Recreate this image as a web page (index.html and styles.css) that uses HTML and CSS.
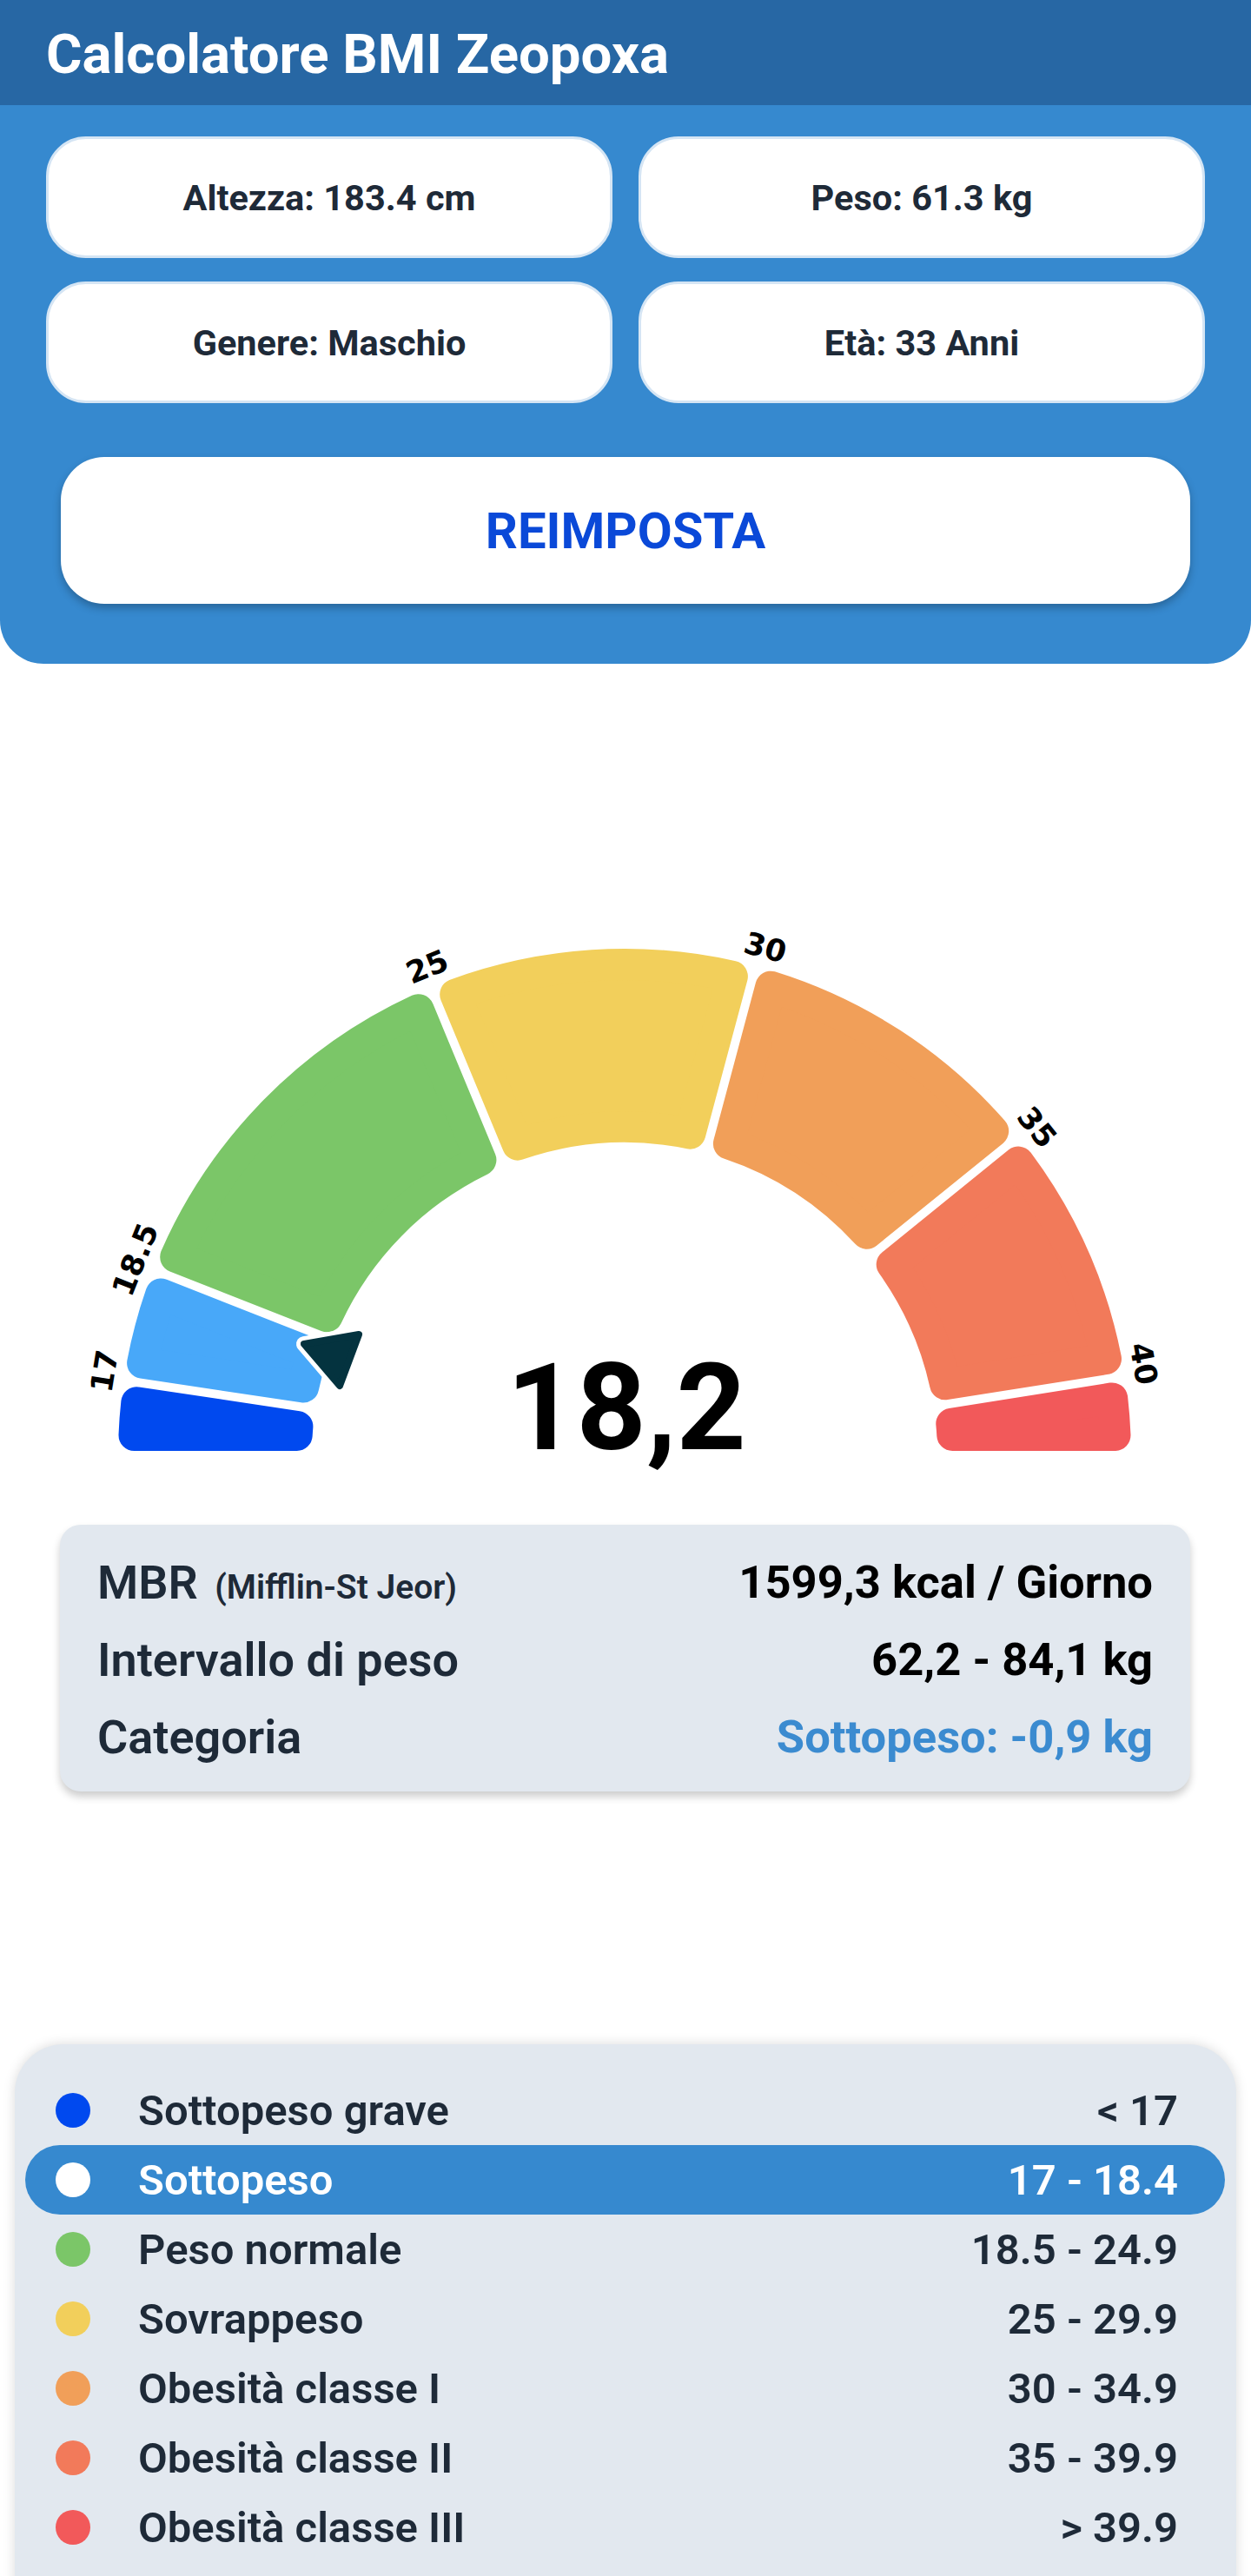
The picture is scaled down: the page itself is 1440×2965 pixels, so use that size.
FILE: index.html
```html
<!DOCTYPE html>
<html lang="it">
<head>
    <meta charset="UTF-8">
    <meta name="viewport" content="width=device-width, initial-scale=1.0">
    <title>Calcolatore BMI Zeopoxa</title>
    <link rel="stylesheet" href="styles.css">
</head>
<body>
    <!-- Top bar -->
    <header class="topBar">
        <h1>Calcolatore BMI Zeopoxa</h1>
    </header>

    <!-- Input summary -->
    <section class="inputPanel">
        <div class="inputGrid">
            <div class="inputCard">Altezza: 183.4 cm</div>
            <div class="inputCard">Peso: 61.3 kg</div>
            <div class="inputCard">Genere: Maschio</div>
            <div class="inputCard">Età: 33 Anni</div>
        </div>
        <button type="button" class="resetButton">REIMPOSTA</button>
    </section>

    <!-- Gauge -->
    <section class="gaugeSection">
        <svg id="gauge" width="1440" height="700" viewBox="0 0 1440 700">
            <g id="gaugeSegments"></g>
            <g id="gaugeLabels"></g>
            <polygon class="pointerOutline" points="413,506 350,517 391,565"></polygon>
            <polygon class="pointer" points="413,506 350,517 391,565"></polygon>
            <text class="bmiValue" x="721" y="638" text-anchor="middle">18,2</text>
        </svg>
    </section>

    <!-- Results -->
    <section class="resultBox">
        <div class="resultRow">
            <span class="resultLabel">MBR <small>(Mifflin-St Jeor)</small></span>
            <span class="resultValue">1599,3 kcal / Giorno</span>
        </div>
        <div class="resultRow">
            <span class="resultLabel">Intervallo di peso</span>
            <span class="resultValue">62,2 - 84,1 kg</span>
        </div>
        <div class="resultRow">
            <span class="resultLabel">Categoria</span>
            <span class="resultValue categoryValue">Sottopeso: -0,9 kg</span>
        </div>
    </section>

    <!-- Legend -->
    <section class="legendBox">
        <div class="legendRow">
            <span class="legendDot dotSevere"></span>
            <span class="legendName">Sottopeso grave</span>
            <span class="legendRange">&lt; 17</span>
        </div>
        <div class="legendRow active">
            <span class="legendDot"></span>
            <span class="legendName">Sottopeso</span>
            <span class="legendRange">17 - 18.4</span>
        </div>
        <div class="legendRow">
            <span class="legendDot dotNormal"></span>
            <span class="legendName">Peso normale</span>
            <span class="legendRange">18.5 - 24.9</span>
        </div>
        <div class="legendRow">
            <span class="legendDot dotOver"></span>
            <span class="legendName">Sovrappeso</span>
            <span class="legendRange">25 - 29.9</span>
        </div>
        <div class="legendRow">
            <span class="legendDot dotObese1"></span>
            <span class="legendName">Obesità classe I</span>
            <span class="legendRange">30 - 34.9</span>
        </div>
        <div class="legendRow">
            <span class="legendDot dotObese2"></span>
            <span class="legendName">Obesità classe II</span>
            <span class="legendRange">35 - 39.9</span>
        </div>
        <div class="legendRow">
            <span class="legendDot dotObese3"></span>
            <span class="legendName">Obesità classe III</span>
            <span class="legendRange">&gt; 39.9</span>
        </div>
    </section>

    <script>
        const cx = 719, cy = 645;
        const rIn = 360, rOut = 583;
        const gap = 10, corner = 18;

        const segments = [
            { from: 0, to: 8.5, color: "#0049ef" },
            { from: 8.5, to: 21.5, color: "#48a8f9" },
            { from: 21.5, to: 67.5, color: "#7bc668" },
            { from: 67.5, to: 105, color: "#f2cf5b" },
            { from: 105, to: 141, color: "#f19f59" },
            { from: 141, to: 171, color: "#f27a5a" },
            { from: 171, to: 180, color: "#f2595a" }
        ];

        const labels = [
            { text: "17", angle: 9.2 },
            { text: "18.5", angle: 21.8 },
            { text: "25", angle: 68 },
            { text: "30", angle: 105.5 },
            { text: "35", angle: 141.5 },
            { text: "40", angle: 170 }
        ];

        function point(deg, r) {
            const a = deg * Math.PI / 180;
            return (cx - r * Math.cos(a)).toFixed(1) + "," + (cy - r * Math.sin(a)).toFixed(1);
        }

        function offset(dist, r) {
            return Math.asin(dist / r) * 180 / Math.PI;
        }

        function drawGauge() {
            const ro = rOut - corner;
            const ri = rIn + corner;
            const d = gap / 2 + corner;
            let html = "";

            segments.forEach((seg) => {
                const o1 = point(seg.from + offset(d, ro), ro);
                const o2 = point(seg.to - offset(d, ro), ro);
                const i2 = point(seg.to - offset(d, ri), ri);
                const i1 = point(seg.from + offset(d, ri), ri);
                html += `<path d="M${o1} A${ro} ${ro} 0 0 1 ${o2} L${i2} A${ri} ${ri} 0 0 0 ${i1} Z"
                    fill="${seg.color}" stroke="${seg.color}" stroke-width="${corner * 2}" stroke-linejoin="round"></path>`;
            });
            document.getElementById("gaugeSegments").innerHTML = html;

            let labelHtml = "";
            labels.forEach((label) => {
                const a = label.angle * Math.PI / 180;
                const x = (cx - 607 * Math.cos(a)).toFixed(1);
                const y = (cy - 607 * Math.sin(a)).toFixed(1);
                labelHtml += `<text class="gaugeLabel" text-anchor="middle" dy="0.36em"
                    transform="translate(${x} ${y}) rotate(${label.angle - 90})">${label.text}</text>`;
            });
            document.getElementById("gaugeLabels").innerHTML = labelHtml;
        }

        drawGauge();
    </script>
</body>
</html>
```

FILE: styles.css
```css
body {
    margin: 0;
    font-family: Roboto, "Noto Sans", sans-serif;
    background-color: #fff;
    color: #1e2a38;
}

.topBar {
    height: 121px;
    padding: 4px 0 0 53px;
    box-sizing: border-box;
    display: flex;
    align-items: center;
    background-color: #2767a4;
}

.topBar h1 {
    margin: 0;
    color: #fff;
    font-size: 63.5px;
    font-weight: 700;
}

/* Input summary */
.inputPanel {
    padding: 36px 53px 69px;
    background-color: #3689cf;
    border-radius: 0 0 50px 50px;
}

.inputGrid {
    display: grid;
    grid-template-columns: 1fr 1fr;
    column-gap: 30px;
    row-gap: 27px;
}

.inputCard {
    height: 140px;
    box-sizing: border-box;
    display: flex;
    align-items: center;
    justify-content: center;
    background-color: #fff;
    border: 3px solid #d5e5f4;
    border-radius: 46px;
    font-size: 41.5px;
    font-weight: 700;
}

.resetButton {
    display: block;
    width: calc(100% - 34px);
    height: 169px;
    margin: 62px 17px 0;
    border: none;
    border-radius: 50px;
    background-color: #fff;
    color: #0a49d8;
    font-family: Roboto, sans-serif;
    font-size: 58px;
    font-weight: 700;
    box-shadow: 0 5px 10px rgba(0, 0, 0, 0.25);
    cursor: pointer;
}

/* Gauge */
.gaugeSection {
    margin-top: 266px;
}

#gauge {
    display: block;
}

.gaugeLabel {
    font-family: "DejaVu Sans", sans-serif;
    font-size: 35px;
    font-weight: 700;
    fill: #000;
}

.pointer {
    fill: #04333f;
    stroke: #04333f;
    stroke-width: 8;
    stroke-linejoin: round;
}

.pointerOutline {
    fill: #fff;
    stroke: #fff;
    stroke-width: 18;
    stroke-linejoin: round;
}

.bmiValue {
    font-family: Roboto, sans-serif;
    font-size: 140px;
    font-weight: 700;
    fill: #000;
}

/* Results */
.resultBox {
    margin: 25px 70px 0 69px;
    padding: 22px 43px 18px;
    background-color: #e2e8ef;
    border-radius: 24px;
    box-shadow: 0 6px 10px rgba(0, 0, 0, 0.2);
}

.resultRow {
    display: flex;
    justify-content: space-between;
    height: 89px;
    line-height: 89px;
    font-size: 54px;
}

.resultLabel {
    font-weight: 600;
}

.resultLabel small {
    margin-left: 6px;
    font-size: 39px;
    font-weight: 600;
}

.resultValue {
    font-size: 52.5px;
    font-weight: 700;
    color: #000;
}

.categoryValue {
    color: #3b8bd0;
}

/* Legend */
.legendBox {
    margin: 291px 17px 0;
    padding: 36px 13px 40px 12px;
    background-color: #e2e8ef;
    border-radius: 56px 56px 0 0;
    box-shadow: 0 0 14px rgba(0, 0, 0, 0.15);
}

.legendRow {
    display: flex;
    align-items: center;
    height: 80px;
    padding: 0 54px 0 35px;
    border-radius: 40px;
    font-size: 49px;
    font-weight: 600;
}

.legendRow.active {
    background-color: #3689cf;
    color: #fff;
}

.legendDot {
    width: 40px;
    height: 40px;
    margin-right: 55px;
    border-radius: 50%;
    background-color: #fff;
}

.legendRange {
    margin-left: auto;
}

.dotSevere { background-color: #0049ef; }
.dotNormal { background-color: #7bc668; }
.dotOver { background-color: #f2cf5b; }
.dotObese1 { background-color: #f19f59; }
.dotObese2 { background-color: #f27a5a; }
.dotObese3 { background-color: #f2595a; }
```
